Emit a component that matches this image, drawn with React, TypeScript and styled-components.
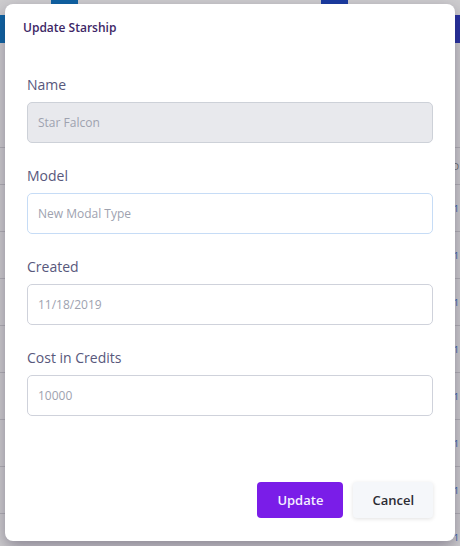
import styled, { createGlobalStyle } from 'styled-components';

/* Global */
const GlobalStyle = createGlobalStyle`
  * {
    box-sizing: border-box;
  }
  body {
    margin: 0;
    font-family: 'Open Sans', 'Liberation Sans', sans-serif;
    background: #ffffff;
    overflow: hidden;
  }
`;

/* Page behind the dialog */
const Page = styled.div`
  position: relative;
  width: 460px;
  height: 546px;
  overflow: hidden;
  background: #ffffff;
`;
const TopTabs = styled.div`
  display: flex;
  height: 4px;
  padding-left: 51px;
  gap: 243px;
`;
const Tab = styled.div<{ color: string }>`
  width: 27px;
  background: ${(props) => props.color};
`;
const Header = styled.div`
  height: 28px;
  margin-top: 11px;
  background: linear-gradient(90deg, #0b7ccb 0%, #1a55c6 60%, #2c3ac6 100%);
`;
const Table = styled.div`
  margin-top: 104px;
  border-top: 1px solid #dcdce0;
`;
const HeadRow = styled.div`
  height: 37px;
  display: flex;
  align-items: center;
  justify-content: flex-end;
  padding-right: 1px;
  border-bottom: 1px solid #dcdce0;
  font-size: 9px;
  color: #777;
`;
const Row = styled.div`
  height: 47px;
  display: flex;
  align-items: center;
  justify-content: flex-end;
  padding-right: 1px;
  border-bottom: 1px solid #dcdce0;
  font-size: 9px;
  color: #2d6fd6;
`;

/* Dialog */
const Overlay = styled.div`
  position: absolute;
  inset: 0;
  background: rgba(22, 18, 30, 0.21);
`;
const Modal = styled.div`
  position: absolute;
  top: 4px;
  left: 5px;
  width: 450px;
  height: 537px;
  display: flex;
  flex-direction: column;
  background: #ffffff;
  border-radius: 8px;
  box-shadow: 0 6px 16px rgba(40, 30, 60, 0.4);
`;
const ModalTitle = styled.h2`
  margin: 0;
  padding: 16px 18px 0;
  font-size: 12px;
  line-height: 16px;
  font-weight: 600;
  color: #3d2766;
`;
const Form = styled.div`
  display: flex;
  flex-direction: column;
  gap: 23px;
  padding: 39px 22px 0;
`;
const Field = styled.div`
  display: flex;
  flex-direction: column;
  gap: 7px;
`;
const Label = styled.label`
  font-size: 14px;
  line-height: 20px;
  color: #58587c;
`;
const Input = styled.input<{ $variant?: 'disabled' | 'focus' }>`
  height: 41px;
  width: 100%;
  padding: 0 10px;
  border-radius: 5px;
  font-family: 'Open Sans', 'Liberation Sans', sans-serif;
  font-size: 12px;
  outline: none;
  border: 1px solid
    ${(props) =>
      props.$variant === 'disabled'
        ? '#cdd1d8'
        : props.$variant === 'focus'
        ? '#c6dcf6'
        : '#cfd2db'};
  background: ${(props) =>
    props.$variant === 'disabled' ? '#e8e9ed' : '#ffffff'};

  &::placeholder {
    color: #9ea2af;
  }
`;
const Footer = styled.div`
  margin-top: auto;
  display: flex;
  justify-content: flex-end;
  gap: 10px;
  padding: 0 22px 23px;
`;
const Button = styled.button<{ $primary?: boolean }>`
  height: 36px;
  padding: 0 ${(props) => (props.$primary ? '20px' : '19px')};
  border: none;
  border-radius: 4px;
  font-family: 'Open Sans', 'Liberation Sans', sans-serif;
  font-size: 13px;
  font-weight: 600;
  cursor: pointer;
  color: ${(props) => (props.$primary ? '#f4efff' : '#2b2b33')};
  background: ${(props) => (props.$primary ? '#7a1de8' : '#f5f7fa')};
  box-shadow: ${(props) =>
    props.$primary ? 'none' : '0 1px 4px rgba(0, 0, 0, 0.12)'};
`;

const fields = [
  { label: 'Name', placeholder: 'Star Falcon', variant: 'disabled' as const },
  { label: 'Model', placeholder: 'New Modal Type', variant: 'focus' as const },
  { label: 'Created', placeholder: '11/18/2019' },
  { label: 'Cost in Credits', placeholder: '10000' },
];

export default function App() {
  return (
    <>
      <GlobalStyle />
      <Page>
        <TopTabs>
          <Tab color='#0c78c9' />
          <Tab color='#1b46c6' />
        </TopTabs>
        <Header />
        <Table>
          <HeadRow>D</HeadRow>
          {Array.from({ length: 8 }).map((_, i) => (
            <Row key={i}>1</Row>
          ))}
        </Table>

        <Overlay>
          <Modal>
            <ModalTitle>Update Starship</ModalTitle>
            <Form>
              {fields.map((field) => (
                <Field key={field.label}>
                  <Label>{field.label}</Label>
                  <Input
                    placeholder={field.placeholder}
                    $variant={field.variant}
                    disabled={field.variant === 'disabled'}
                  />
                </Field>
              ))}
            </Form>
            <Footer>
              <Button $primary>Update</Button>
              <Button>Cancel</Button>
            </Footer>
          </Modal>
        </Overlay>
      </Page>
    </>
  );
}
